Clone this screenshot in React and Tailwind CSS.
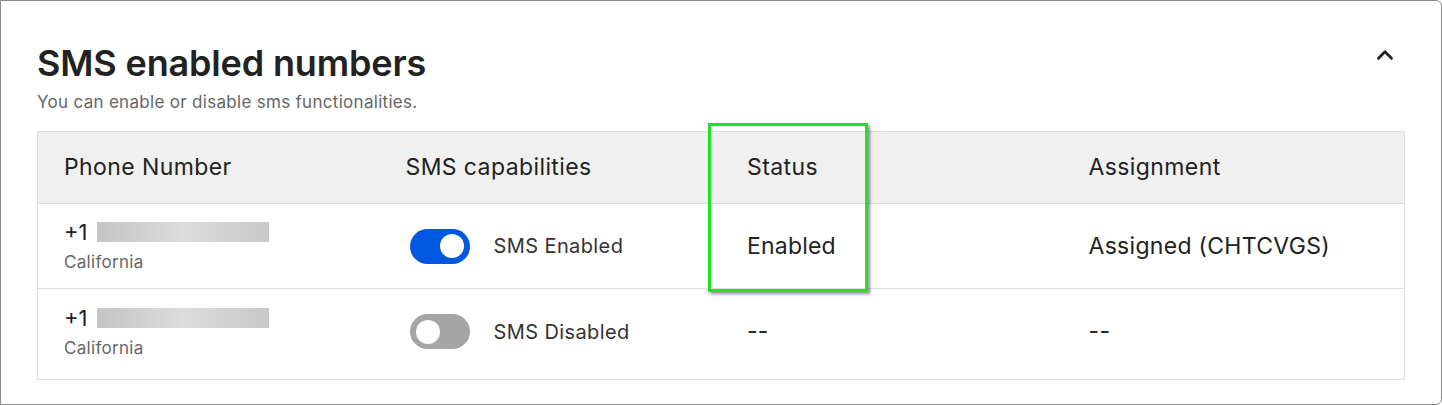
import React from 'react';
import { ChevronUp } from 'lucide-react';

const rows = [
  { enabled: true, label: 'SMS Enabled', status: 'Enabled', assignment: 'Assigned (CHTCVGS)', h: 'h-[85px] border-b border-[#dedede]' },
  { enabled: false, label: 'SMS Disabled', status: '--', assignment: '--', h: 'h-[90px] pb-[5px]' },
];

function Toggle({ on }) {
  return (
    <div
      className={`w-[60px] h-[35px] rounded-full flex items-center px-[6px] ${
        on ? 'bg-[#0057e0] justify-end' : 'bg-[#a6a6a6] justify-start'
      }`}
    >
      <div className="w-[24px] h-[24px] rounded-full bg-white" />
    </div>
  );
}

export default function App() {
  return (
    <div
      className="w-[1442px] h-[405px] bg-white border border-[#8a8a8a] rounded-r-[6px] relative text-[#222]"
      style={{ fontFamily: 'Inter, "Noto Sans", sans-serif' }}
    >
      {/* Header */}
      <div className="flex justify-between pl-[36px] pr-[43px] pt-[39px]">
        <h1 className="text-[36px] leading-[46px] font-semibold tracking-[-0.15px] text-[#222]">SMS enabled numbers</h1>
        <ChevronUp size={26} strokeWidth={2.6} className="mt-[2px] text-[#222]" />
      </div>
      <p className="pl-[36px] mt-[6px] text-[17px] leading-[20px] tracking-[0.3px] text-[#666]">
        You can enable or disable sms functionalities.
      </p>

      {/* Table */}
      <div className="ml-[36px] mr-[36px] mt-[19px] border border-[#dedede]">
        <div className="grid grid-cols-4 h-[72px] items-center bg-[#f0f0f0] border-b border-[#dedede] text-[23px] tracking-[0.4px] text-[#222]">
          <div className="pl-[26px]">Phone Number</div>
          <div className="pl-[26px]">SMS capabilities</div>
          <div className="pl-[26px]">Status</div>
          <div className="pl-[26px]">Assignment</div>
        </div>
        {rows.map((r, i) => (
          <div key={i} className={`grid grid-cols-4 items-center ${r.h}`}>
            <div className="pl-[26px]">
              <div className="flex items-center gap-[9px] h-[24px]">
                <span className="text-[22px] leading-[24px]">+1</span>
                <div className="w-[172px] h-[20px] bg-gradient-to-r from-[#c4c4c4] via-[#dcdcdc] to-[#c8c8c8]" />
              </div>
              <div className="text-[17px] leading-[20px] mt-[8px] tracking-[0.3px] text-[#666]">California</div>
            </div>
            <div className="pl-[30px] flex items-center gap-[24px]">
              <Toggle on={r.enabled} />
              <span className="text-[20px] tracking-[0.4px] text-[#333]">{r.label}</span>
            </div>
            <div className="pl-[26px] text-[23px] tracking-[0.2px] text-[#222]">{r.status}</div>
            <div className="pl-[26px] text-[23px] tracking-[0.3px] text-[#222]">{r.assignment}</div>
          </div>
        ))}
      </div>

      {/* Annotation highlight */}
      <div className="absolute left-[707px] top-[122px] w-[160px] h-[169px] border-[3px] border-[#1ee61e] shadow-[2px_2px_3px_rgba(0,0,0,0.45)]" />
    </div>
  );
}
